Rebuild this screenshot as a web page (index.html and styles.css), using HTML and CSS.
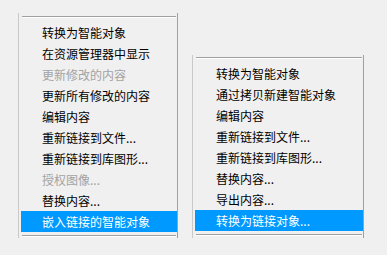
FILE: index.html
```html
<!DOCTYPE html>
<html lang="zh-CN">
<head>
<meta charset="utf-8">
<link rel="stylesheet" href="styles.css">
</head>
<body>
<div class="stage">
  <div class="menu menu-a">
    <div class="sep"></div>
    <ul class="items">
      <li>转换为智能对象</li>
      <li>在资源管理器中显示</li>
      <li class="disabled">更新修改的内容</li>
      <li>更新所有修改的内容</li>
      <li>编辑内容</li>
      <li>重新链接到文件...</li>
      <li>重新链接到库图形...</li>
      <li class="disabled">授权图像...</li>
      <li>替换内容...</li>
      <li class="active">嵌入链接的智能对象</li>
    </ul>
    <div class="sep sep-bottom"></div>
  </div>
  <div class="menu menu-b">
    <div class="sep"></div>
    <ul class="items">
      <li>转换为智能对象</li>
      <li>通过拷贝新建智能对象</li>
      <li>编辑内容</li>
      <li>重新链接到文件...</li>
      <li>重新链接到库图形...</li>
      <li>替换内容...</li>
      <li>导出内容...</li>
      <li class="active">转换为链接对象...</li>
    </ul>
    <div class="sep sep-bottom"></div>
  </div>
</div>
</body>
</html>
```

FILE: styles.css
```css
html, body {
  margin: 0;
  padding: 0;
  background: #f0f0f0;
}

body {
  width: 387px;
  height: 255px;
  overflow: hidden;
  font-family: "Noto Sans CJK SC", "Microsoft YaHei", sans-serif;
  font-size: 12px;
}

.stage {
  display: flex;
  align-items: flex-start;
  padding-left: 18px;
  gap: 14px;
}

.menu {
  background: #f0f0f0;
  border-left: 1px solid #c9c9c9;
  border-right: 1px solid #a0a0a0;
  box-sizing: border-box;
  padding: 1px 0 1px 0;
}

.menu-a {
  width: 160px;
  margin-top: 13px;
  padding-top: 3px;
}

.menu-b {
  width: 172px;
  margin-top: 55px;
  padding-top: 2px;
  padding-bottom: 2px;
}

.sep {
  height: 1px;
  background: #a0a0a0;
  border-bottom: 1px solid #ffffff;
  margin: 0 1px 4px 3px;
}

.sep-bottom {
  margin: 3px 1px 0 3px;
}

.items {
  list-style: none;
  margin: 0;
  padding: 0 0 0 2px;
}

.items li {
  height: 21px;
  line-height: 21px;
  padding-left: 21px;
  color: #000000;
  white-space: nowrap;
}

.items li.disabled {
  color: #a3a3a3;
}

.items li.active {
  background: #0099ff;
  color: #ffffff;
}
```
